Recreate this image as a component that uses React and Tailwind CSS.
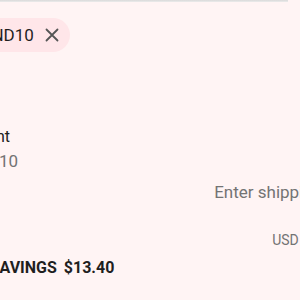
import React from "react";

export default function App() {
  return (
    <div className="w-[300px] h-[300px] overflow-hidden bg-[#fff4f4] font-['Roboto',sans-serif] text-[#1f1f1f]">
      <div className="h-[2px] w-[288px] bg-gradient-to-b from-[#d9d9d9] to-[#ececec]" />
      <div className="ml-[-49px] w-[426px] flex flex-col">
        <div className="mt-[16px] flex">
          <div className="ml-[-2px] h-[34px] flex items-center gap-[11px] rounded-full bg-[#ffe6e9] pl-[12px] pr-[11px]">
            <span className="text-[17px] leading-[24px]">SPEND10</span>
            <svg width="14" height="14" viewBox="0 0 14 14" className="text-[#555]">
              <path d="M1.5 1.5 L12.5 12.5 M12.5 1.5 L1.5 12.5" stroke="currentColor" strokeWidth="1.8" strokeLinecap="round" />
            </svg>
          </div>
        </div>

        <div className="mt-[73px] flex justify-between">
          <div className="flex flex-col">
            <span className="ml-[-4px] text-[16px] leading-[24px] text-[#202020]">Discount</span>
            <span className="ml-[-10px] text-[17px] leading-[24px] text-[#737373]">SPEND 10</span>
          </div>
          <span className="text-[16px] leading-[24px] font-semibold">-$13.40</span>
        </div>

        <div className="mt-[7px] flex justify-between">
          <span className="text-[14px] leading-[24px] text-[#fff4f4]">Shipping</span>
          <span className="mr-[-10px] text-[17px] leading-[24px] text-[#737373]">Enter shipping address</span>
        </div>

        <div className="mt-[22px] flex justify-between items-center h-[28px]">
          <span className="text-[20px] font-semibold text-[#fff4f4]">Total</span>
          <div className="mr-[-4px] flex items-center gap-[8px]">
            <span className="text-[14px] leading-[20px] text-[#737373]">USD</span>
            <span className="text-[20px] font-semibold">$121.60</span>
          </div>
        </div>

        <div className="ml-[-14px] flex items-center gap-[7px] h-[28px]">
          <span className="text-[16px] leading-[24px] font-bold">TOTAL SAVINGS</span>
          <span className="text-[16px] leading-[24px] font-bold">$13.40</span>
        </div>
      </div>
    </div>
  );
}
